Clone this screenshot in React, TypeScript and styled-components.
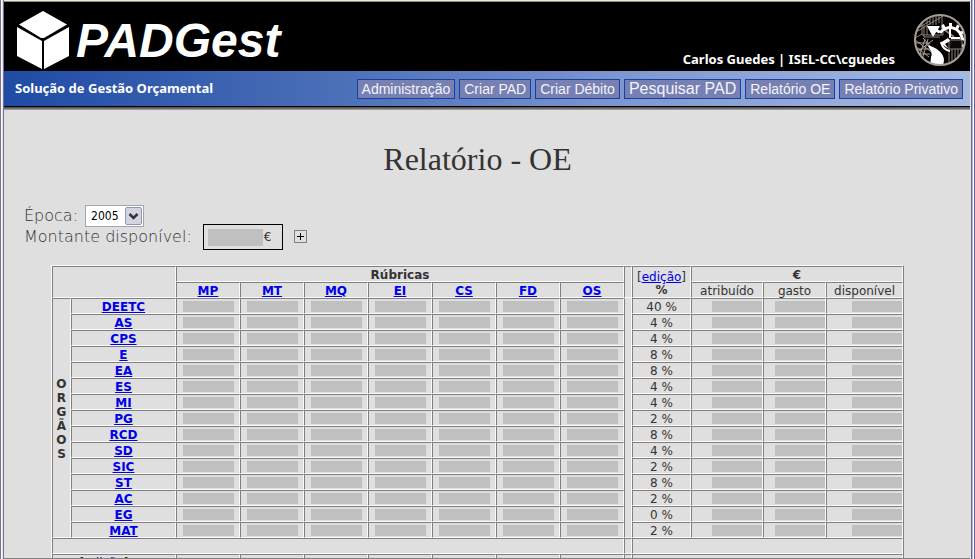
import React from "react";
import styled, { createGlobalStyle } from "styled-components";

const GlobalStyle = createGlobalStyle`
  * { box-sizing: border-box; }
  body {
    margin: 0;
    background: #dfdfdf;
    color: #333;
    font-family: "DejaVu Sans", Verdana, sans-serif;
    font-size: 12px;
  }
`;

const Window = styled.div`
  height: 100vh;
  display: flex;
  overflow: hidden;
`;

const LeftFrame = styled.div`
  flex: none;
  width: 4px;
  background: linear-gradient(to right, #77718f 1px, #ffffff 1px 2px, #e4e2ee 2px 3px, #77718f 3px);
`;

const RightFrame = styled.div`
  flex: none;
  width: 5px;
  background: linear-gradient(to right, #e4e2ea 1px, #66648c 1px 2px, #b4b4d8 2px 3px, #ffffff 3px 4px, #66648c 4px);
`;

const Page = styled.div`
  flex: 1;
  min-width: 0;
  overflow: hidden;
  border-top: 1px solid #ece9d8;
  border-bottom: 1px solid #808080;
`;

const Banner = styled.header`
  display: flex;
  align-items: flex-end;
  height: 70px;
  padding: 0 3px 0 12px;
  border-top: 1px solid #8c8c84;
  background: #000;
  color: #fff;
`;

const CubeLogo = styled.svg`
  flex: none;
  width: 54px;
  height: 60px;
  margin-bottom: 1px;
`;

const Brand = styled.div`
  flex: 1;
  padding-left: 6px;
  font: italic bold 48px/60px "Liberation Sans", Arial, sans-serif;
`;

const User = styled.div`
  padding: 0 18px 3px 0;
  font: bold 13px/18px "Noto Sans", Tahoma, sans-serif;
  white-space: nowrap;
`;

const Emblem = styled.svg`
  flex: none;
  width: 54px;
  height: 54px;
  margin-bottom: 4px;
`;

const Bar = styled.div`
  display: flex;
  align-items: center;
  justify-content: space-between;
  height: 35px;
  padding: 0 7px 0 11px;
  background: linear-gradient(to right, #1f4ba5, #4c70b8 35%, #7f98d0 65%, #a6bae0);
`;

const BarShadow = styled.div`
  height: 4px;
  background: linear-gradient(to bottom, #000 1px, #555 1px 2px, #707070 2px 3px, #999 3px);
`;

const Tagline = styled.div`
  padding-bottom: 2px;
  color: #fff;
  font: bold 13px/18px "Noto Sans", Tahoma, sans-serif;
  white-space: nowrap;
`;

const Nav = styled.nav`
  display: flex;
  gap: 4px;
`;

const NavButton = styled.button<{ $large?: boolean }>`
  height: 20px;
  padding: 0 4px;
  border: 1px solid #1840a0;
  background: #7780b2;
  color: #f4f4fc;
  font: ${(p) => (p.$large ? 16 : 14)}px/18px "Liberation Sans", Arial, sans-serif;
  white-space: nowrap;
`;

const Content = styled.main`
  padding: 31px 39px 0 20px;
`;

const Title = styled.h1`
  margin: 0 0 29px;
  text-align: center;
  font: 32px/36px "Liberation Serif", "Times New Roman", serif;
`;

const Filters = styled.div`
  font-size: 16px;
  font-weight: 200;
  line-height: 20px;
`;

const YearRow = styled.div`
  display: flex;
  align-items: center;
  height: 20px;
  gap: 7px;
`;

const AmountRow = styled(YearRow)`
  height: 26px;
  margin-top: -2px;
  gap: 11px;
`;

const YearField = styled.div`
  display: grid;
  width: 59px;
  height: 22px;
  border: 1px solid #a0a8b4;
  background: #fff;
`;

const YearSelect = styled.select`
  grid-area: 1 / 1;
  appearance: none;
  border: 0;
  padding: 0 5px;
  background: transparent;
  color: #000;
  font: 12px/20px "DejaVu Sans Condensed", Tahoma, sans-serif;
`;

const Arrow = styled.svg`
  grid-area: 1 / 1;
  justify-self: end;
  align-self: center;
  width: 17px;
  height: 18px;
  margin-right: 1px;
  pointer-events: none;
`;

const Amount = styled.div`
  display: flex;
  align-items: center;
  gap: 1px;
  width: 80px;
  height: 26px;
  padding-left: 4px;
  border: 1px solid #000;
  font-size: 12px;
  font-weight: 400;
`;

const AmountMask = styled.span`
  width: 55px;
  height: 17px;
  background: #c0c0c0;
`;

const Expand = styled.button`
  display: grid;
  place-items: center;
  width: 13px;
  height: 13px;
  margin-bottom: 2px;
  padding: 0;
  border: 1px solid #808080;
  background: transparent;
`;

const Report = styled.table`
  margin: 15px auto 0;
  table-layout: fixed;
  width: 853px;
  border-spacing: 0;
  border: 1px solid;
  border-color: #fafafa #808080 #808080 #fafafa;
`;

const Col = styled.col<{ $w: number }>`
  width: ${(p) => p.$w}px;
`;

const Row = styled.tr`
  height: 16px;
`;

const edges = `
  height: 16px;
  padding: 2px 0 0;
  border: 1px solid;
  border-color: #808080 #fafafa #fafafa #808080;
  line-height: 12px;
  text-align: center;
`;

const Head = styled.th<{ $plain?: boolean }>`
  ${edges}
  font-weight: ${(p) => (p.$plain ? 400 : 700)};
`;

const Cell = styled.td`
  ${edges}
`;

const MaskCell = styled.td`
  ${edges}
  padding: 0;
`;

const TotalsCell = styled.td`
  ${edges}
  padding-right: 20px;
`;

const VerticalHead = styled.th`
  ${edges}
  padding: 2px 3px 0;
  line-height: 14px;
  word-break: break-all;
`;

const EditLine = styled.div`
  font-weight: 400;
  line-height: 14px;
`;

const Link = styled.a`
  color: #0000e8;
  text-decoration: underline;
`;

const Mask = styled.span<{ $end?: boolean }>`
  display: block;
  width: ${(p) => (p.$end ? 50 : 51)}px;
  height: 11px;
  margin: 1px 0 0 ${(p) => (p.$end ? "auto" : "6px")};
  background: #c0c0c0;
`;

const columns = [19, 105, 64, 64, 64, 64, 64, 64, 64, 8, 59, 72, 63, 77];
const rubrics = ["MP", "MT", "MQ", "EI", "CS", "FD", "OS"];
const amounts = ["atribuído", "gasto", "disponível"];
const departments: [string, number][] = [
  ["DEETC", 40], ["AS", 4], ["CPS", 4], ["E", 8], ["EA", 8],
  ["ES", 4], ["MI", 4], ["PG", 2], ["RCD", 8], ["SD", 4],
  ["SIC", 2], ["ST", 8], ["AC", 2], ["EG", 0], ["MAT", 2],
];
const menu = ["Administração", "Criar PAD", "Criar Débito", "Pesquisar PAD", "Relatório OE", "Relatório Privativo"];

const gearTeeth = [0, 28, 56, 84, 112, 304, 332];

function IselEmblem() {
  return (
    <Emblem viewBox="0 0 54 54" aria-hidden="true" fill="none">
      <defs>
        <clipPath id="disc"><circle cx="27" cy="27" r="25" /></clipPath>
      </defs>
      <g clipPath="url(#disc)">
        <g stroke="#8e8278">
          <path d="M14 6V22M17 4V12M20 2V12M23 2V12M26 2V10M29 2V12M9 10V22H30V13M11 12V24H27M5 15 17 8M3 19 30 3M2 25 9 21" />
          <path d="M39 36V50M42 36V50M45 36V48M48 35V44M36 37V52" />
        </g>
        <path d="M2 27 20 40M2 33 16 44M3 40 20 27M6 44 12 26M2 30H17M2 36H19M5 41H17M15 26 9 47M10 25 18 34" stroke="#a89d94" />
        <path d="M28 14 41 24" stroke="#8e8278" strokeWidth="2" />
        <path d="M49 27A12 12 0 0 0 27 20" stroke="#fff" strokeWidth="3" />
        <g fill="#fff">
          {gearTeeth.map((a) => (
            <path key={a} d="M36 10h3v4h-3Z" transform={`rotate(${a} 37 27)`} />
          ))}
        </g>
        <path d="M37 15V25M38 25H47M28 29C29 34 32 37 37 38" stroke="#fff" strokeWidth="2" />
        <path d="M36 27H49V36H36Z" fill="#0b0908" stroke="#8e8278" />
        <path d="M14 13H27L20 24Z" fill="#fff" />
        <path d="M14 32C23 34 31 40 31 47L30 54H17L18 44C20 40 17 36 14 32Z" fill="#fff" />
        <path d="M27 30 35 25 37 28 32 31 36 36Z" fill="#fff" />
      </g>
      <circle cx="27" cy="27" r="25" stroke="#a89d94" strokeWidth="2" />
    </Emblem>
  );
}

export default function App() {
  return (
    <>
      <GlobalStyle />
      <Window>
        <LeftFrame />
        <Page>
          <Banner>
            <CubeLogo viewBox="0 0 54 60" aria-hidden="true" fill="#fff">
              <path d="M27 1 51 14.500 28 28H25L3 14.500Z" />
              <path d="M1 17 26 31V59L1 46Z" />
              <path d="M53 17 28 31V59L53 46Z" />
            </CubeLogo>
            <Brand>PADGest</Brand>
            <User>Carlos Guedes | ISEL-CC\cguedes</User>
            <IselEmblem />
          </Banner>
          <Bar>
            <Tagline>Solução de Gestão Orçamental</Tagline>
            <Nav>
              {menu.map((item) => (
                <NavButton key={item} $large={item === "Pesquisar PAD"}>{item}</NavButton>
              ))}
            </Nav>
          </Bar>
          <BarShadow />
          <Content>
            <Title>Relatório - OE</Title>
            <Filters>
              <YearRow>
                <label htmlFor="year">Época:</label>
                <YearField>
                  <YearSelect id="year" defaultValue="2005">
                    <option>2005</option>
                  </YearSelect>
                  <Arrow viewBox="0 0 17 18" aria-hidden="true">
                    <rect x=".5" y=".5" width="16" height="17" rx="1.500" fill="#d2d4e2" stroke="#9298ac" />
                    <path d="M4.500 7 8.500 11 12.500 7" fill="none" stroke="#333" strokeWidth="2.500" />
                  </Arrow>
                </YearField>
              </YearRow>
              <AmountRow>
                <span>Montante disponível:</span>
                <Amount><AmountMask />€</Amount>
                <Expand aria-label="Expandir">
                  <svg width="7" height="7" viewBox="0 0 7 7"><path d="M0 3.500H7M3.500 0V7" stroke="#000" /></svg>
                </Expand>
              </AmountRow>
            </Filters>
            <Report>
              <colgroup>{columns.map((w, i) => <Col key={i} $w={w} />)}</colgroup>
              <thead>
                <Row>
                  <Cell colSpan={2} rowSpan={2} />
                  <Head colSpan={7}>Rúbricas</Head>
                  <Cell rowSpan={2 + departments.length} />
                  <Head rowSpan={2}>
                    <EditLine>[<Link href="#percent">edição</Link>]</EditLine>
                    %
                  </Head>
                  <Head colSpan={3}>€</Head>
                </Row>
                <Row>
                  {rubrics.map((r) => <Head key={r}><Link href={`#${r}`}>{r}</Link></Head>)}
                  {amounts.map((a) => <Head key={a} $plain>{a}</Head>)}
                </Row>
              </thead>
              <tbody>
                {departments.map(([name, share], i) => (
                  <Row key={name}>
                    {i === 0 && <VerticalHead rowSpan={departments.length}>ORGÃOS</VerticalHead>}
                    <Head><Link href={`#${name}`}>{name}</Link></Head>
                    {rubrics.map((r) => <MaskCell key={r}><Mask /></MaskCell>)}
                    {i === 0 && <SpacerCell rowSpan={departments.length} />}
                    <Cell>{share} %</Cell>
                    {amounts.map((a) => <MaskCell key={a}><Mask $end /></MaskCell>)}
                  </Row>
                ))}
                <Row>
                  <Cell colSpan={9} />
                  <Cell />
                  <Cell colSpan={4} />
                </Row>
                <Row>
                  <TotalsCell colSpan={2}>[<Link href="#totals">edição</Link>]</TotalsCell>
                  {rubrics.map((r) => <Cell key={r} />)}
                  <Cell />
                  <Cell colSpan={4} />
                </Row>
              </tbody>
            </Report>
          </Content>
        </Page>
        <RightFrame />
      </Window>
    </>
  );
}

const SpacerCell = styled(Cell)`
  border-top-color: transparent;
`;
